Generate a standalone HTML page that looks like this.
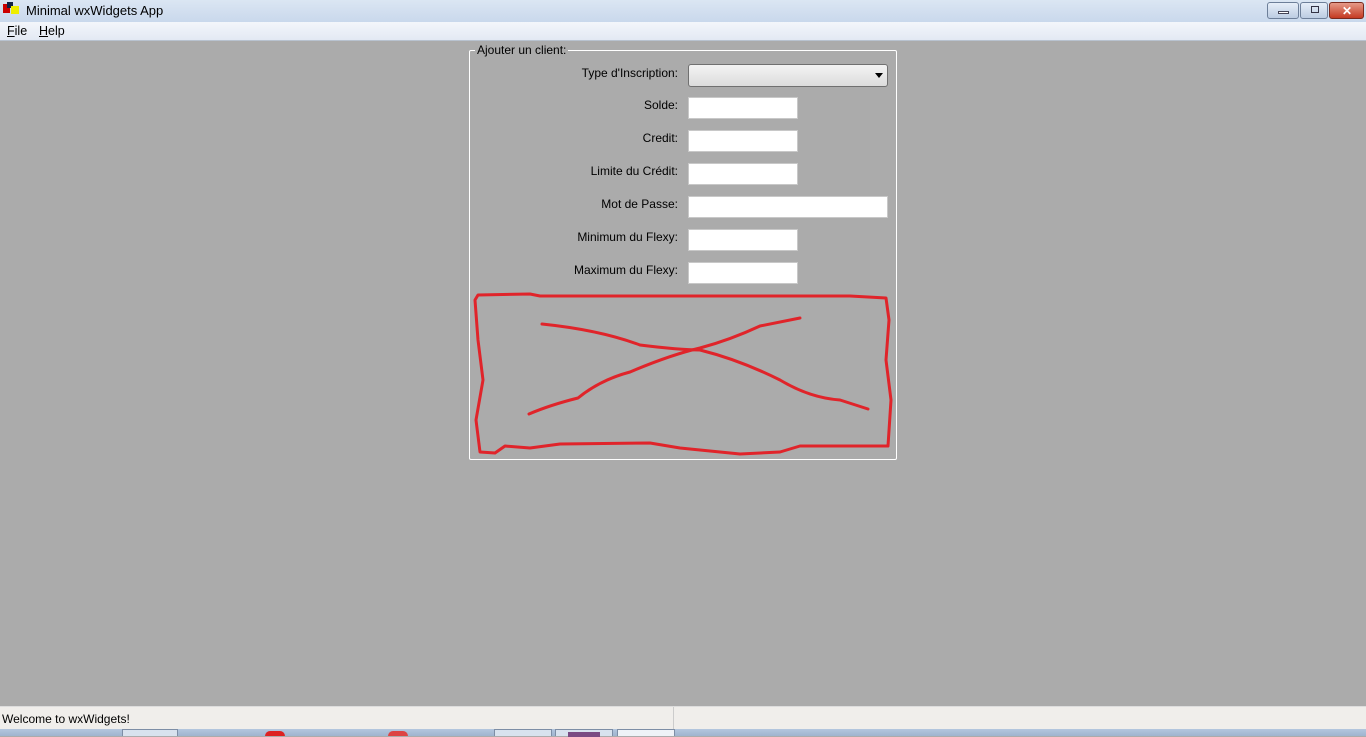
<!DOCTYPE html>
<html><head><meta charset="utf-8"><style>
*{margin:0;padding:0;box-sizing:border-box}
body{width:1366px;height:736px;overflow:hidden;background:#ababab;font-family:"Liberation Sans",sans-serif;font-size:12px;color:#000;position:relative}
.title{position:absolute;left:0;top:0;width:1366px;height:22px;background:linear-gradient(#dbe6f3,#c9d8ec);}
.title .t{position:absolute;left:26px;top:3px;font-size:13px}
.menu{position:absolute;left:0;top:22px;width:1366px;height:19px;background:linear-gradient(#f3f6fb,#e3e9f3);border-bottom:1px solid #b8c2cf}
.menu span{position:absolute;top:2px;font-size:12.5px}
.btn{position:absolute;top:2px;height:17px;border:1px solid #6d7f99;border-radius:3px;background:linear-gradient(#e6eef8,#bccce2)}
.lab{position:absolute;right:688px;font-size:12px;text-align:right;white-space:nowrap}
.inp{position:absolute;left:688px;height:22px;background:#fff;border:1px solid #c8c8c8}
.status{position:absolute;left:0;top:706px;width:1366px;height:23px;background:#f0eeeb;border-top:1px solid #ddd}
.task{position:absolute;left:0;top:729px;width:1366px;height:7px;background:linear-gradient(#b3c6de,#9fb4cf)}
</style></head><body>
<div class="title">
<div style="position:absolute;left:3px;top:4px;width:7px;height:9px;background:#c00"></div>
<div style="position:absolute;left:7px;top:2px;width:6px;height:6px;background:#124"></div>
<div style="position:absolute;left:11px;top:6px;width:8px;height:8px;background:#ee0"></div>
<span class="t">Minimal wxWidgets App</span>
<div class="btn" style="left:1267px;width:32px"><div style="position:absolute;left:10px;top:8px;width:11px;height:3px;background:#fff;border:1px solid #445"></div></div>
<div class="btn" style="left:1300px;width:28px"><div style="position:absolute;left:10px;top:3px;width:8px;height:7px;border:1px solid #334"></div></div>
<div class="btn" style="left:1329px;width:35px;background:linear-gradient(#e59a88,#c43a22);border-color:#7a2a1e"><div style="position:absolute;left:12px;top:1px;color:#fff;font-weight:bold;font-size:12px">✕</div></div>
</div>
<div class="menu"><span style="left:7px"><u>F</u>ile</span><span style="left:39px"><u>H</u>elp</span></div>

<div style="position:absolute;left:469px;top:50px;width:428px;height:410px;border:1px solid #fff;border-radius:2px"></div>
<div style="position:absolute;left:475px;top:43px;background:#ababab;padding:0 2px;font-size:12px">Ajouter un client:</div>

<div class="lab" style="top:66px">Type d'Inscription:</div>
<div style="position:absolute;left:688px;top:64px;width:200px;height:23px;border:1px solid #707070;border-radius:3px;background:linear-gradient(#f3f3f3,#dcdcdc)"><div style="position:absolute;right:4px;top:8px;border-left:4px solid transparent;border-right:4px solid transparent;border-top:5px solid #000"></div></div>
<div class="lab" style="top:98px">Solde:</div><div class="inp" style="top:97px;width:110px"></div>
<div class="lab" style="top:131px">Credit:</div><div class="inp" style="top:130px;width:110px"></div>
<div class="lab" style="top:164px">Limite du Crédit:</div><div class="inp" style="top:163px;width:110px"></div>
<div class="lab" style="top:197px">Mot de Passe:</div><div class="inp" style="top:196px;width:200px"></div>
<div class="lab" style="top:230px">Minimum du Flexy:</div><div class="inp" style="top:229px;width:110px"></div>
<div class="lab" style="top:263px">Maximum du Flexy:</div><div class="inp" style="top:262px;width:110px"></div>

<svg style="position:absolute;left:0;top:0" width="1366" height="736" fill="none" stroke="#e0242a" stroke-width="3" stroke-linecap="round" stroke-linejoin="round">
<path d="M478 295 L530 294 L540 296 L850 296 L886 298 L889 320 L886 360 L891 400 L888 446 L800 446 L780 452 L740 454 L680 448 L650 443 L560 444 L530 448 L505 446 L495 453 L480 452 L476 420 L483 380 L478 340 L475 300 Z"/>
<path d="M542 324 Q600 330 640 345 Q680 350 700 350 Q740 360 780 380 Q810 398 840 400 L868 409"/>
<path d="M529 414 Q550 405 578 398 Q600 380 630 372 Q670 355 700 348 Q730 340 760 326 L800 318"/>
</svg>

<div class="status"><span style="position:absolute;left:2px;top:5px;font-size:12px">Welcome to wxWidgets!</span><div style="position:absolute;left:673px;top:0;width:1px;height:22px;background:#ccc"></div></div>
<div class="task">
<div style="position:absolute;left:122px;top:0;width:56px;height:7px;border:1px solid #7d8ea6;border-bottom:0;background:#d8e2ee"></div>
<div style="position:absolute;left:494px;top:0;width:58px;height:7px;border:1px solid #7d8ea6;border-bottom:0;background:#d8e2ee"></div>
<div style="position:absolute;left:555px;top:0;width:58px;height:7px;border:1px solid #7d8ea6;border-bottom:0;background:#d8e2ee"><div style="margin:2px 0 0 12px;width:32px;height:5px;background:#7a4a82"></div></div>
<div style="position:absolute;left:617px;top:0;width:58px;height:7px;border:1px solid #7d8ea6;border-bottom:0;background:#eef2f7"></div>
<div style="position:absolute;left:265px;top:2px;width:20px;height:5px;border-radius:10px 10px 0 0;background:#d22"></div>
<div style="position:absolute;left:388px;top:2px;width:20px;height:5px;border-radius:10px 10px 0 0;background:#d44"></div>
</div>
</body></html>
